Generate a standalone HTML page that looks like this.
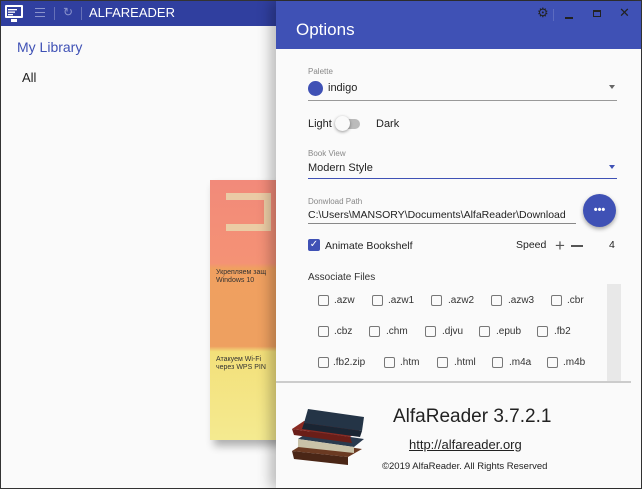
<!DOCTYPE html>
<html><head><meta charset="utf-8"><style>
*{margin:0;padding:0;box-sizing:border-box}
body{width:642px;height:489px;overflow:hidden;font-family:"Liberation Sans",sans-serif;background:#333;position:relative}
.a{position:absolute}
#win{left:1px;top:1px;width:640px;height:487px;background:#fafafa}
#tb{left:0;top:0;width:640px;height:25px;background:#303f9f}
#opt{left:276px;top:1px;width:365px;height:487px;background:#fafafa;box-shadow:-6px 0 12px rgba(0,0,0,.25)}
#oh{left:0;top:0;width:365px;height:48px;background:#3f51b5}
.lbl{font-size:8px;color:#888}
.txt{font-size:11px;color:#222}
.cb{width:11px;height:11px;border:1.5px solid #777;border-radius:2px;display:inline-block}
.ft{font-size:10px;color:#333;margin-top:1px}
</style></head><body>
<div id="win" class="a">
<div id="tb" class="a">
 <svg class="a" style="left:3px;top:3px" width="20" height="20" viewBox="0 0 20 20"><rect x="1" y="1" width="18" height="13" fill="#fff" rx="1"/><rect x="3" y="3" width="14" height="9" fill="#303f9f"/><rect x="4" y="5" width="9" height="1.3" fill="#fff"/><rect x="4" y="7.5" width="7" height="1.3" fill="#fff"/><rect x="4" y="10" width="5" height="1.3" fill="#fff"/><rect x="7" y="15" width="6" height="3" fill="#fff"/></svg>
 <div class="a" style="left:34px;top:7px;width:10px;height:9px;border-top:1.5px solid #8a93cc;border-bottom:1.5px solid #8a93cc"><div style="margin-top:2.5px;height:1.5px;background:#8a93cc"></div></div>
 <div class="a" style="left:53px;top:6px;width:1px;height:13px;background:#6570b8"></div>
 <div class="a" style="left:62px;top:4px;font-size:12px;color:#8a93cc">&#x21bb;</div>
 <div class="a" style="left:80px;top:6px;width:1px;height:13px;background:#6570b8"></div>
 <div class="a" style="left:88px;top:4px;font-size:13px;color:#fff">ALFAREADER</div>
</div>
<div class="a" style="left:16px;top:38px;font-size:14px;color:#3f51b5">My Library</div>
<div class="a" style="left:21px;top:69px;font-size:13px;color:#222">All</div>
<div class="a" style="left:209px;top:179px;width:70px;height:260px;background:linear-gradient(#f28a7a 0%,#f49275 32%,#f0a060 34%,#eea060 64%,#f3e07a 66%,#f4ea90 100%);box-shadow:4px 6px 8px rgba(0,0,0,.3)"></div>
<div class="a" style="left:225px;top:192px;width:45px;height:38px;border:7px solid #e8e7b8;border-left:none;opacity:.7"></div>
<div class="a" style="left:215px;top:268px;font-size:7px;color:#333;line-height:8px">Укрепляем защ<br>Windows 10</div>
<div class="a" style="left:215px;top:355px;font-size:7px;color:#333;line-height:8px">Атакуем Wi-Fi<br>через WPS PIN</div>
</div>
<div id="opt" class="a">
<div id="oh" class="a">
 <div class="a" style="left:20px;top:19px;font-size:17px;color:#fff">Options</div>
 <div class="a" style="left:261px;top:4px;font-size:13px;color:#222">&#9881;</div>
 <div class="a" style="left:277px;top:8px;width:1px;height:12px;background:#5c6bc0"></div>
 <div class="a" style="left:289px;top:16px;width:8px;height:2px;background:#222"></div>
 <div class="a" style="left:317px;top:9px;width:8px;height:7px;border:1.5px solid #222;border-top-width:2.5px"></div>
 <div class="a" style="left:343px;top:4px;font-size:13px;color:#222">✕</div>
</div>
<div class="a lbl" style="left:32px;top:66px">Palette</div>
<div class="a" style="left:32px;top:80px;width:15px;height:15px;border-radius:50%;background:#3f51b5"></div>
<div class="a txt" style="left:52px;top:81px">indigo</div>
<div class="a" style="left:333px;top:84px;border:3px solid transparent;border-top:4px solid #666"></div>
<div class="a" style="left:32px;top:99px;width:309px;height:1px;background:#999"></div>
<div class="a txt" style="left:32px;top:117px">Light</div>
<div class="a" style="left:62px;top:118px;width:22px;height:10px;border-radius:5px;background:#bbb"></div>
<div class="a" style="left:59px;top:115px;width:15px;height:15px;border-radius:50%;background:#fafafa;box-shadow:0 1px 3px rgba(0,0,0,.4)"></div>
<div class="a txt" style="left:100px;top:117px">Dark</div>
<div class="a lbl" style="left:32px;top:148px">Book View</div>
<div class="a txt" style="left:32px;top:161px">Modern Style</div>
<div class="a" style="left:333px;top:164px;border:3px solid transparent;border-top:4px solid #3f51b5"></div>
<div class="a" style="left:32px;top:177px;width:309px;height:1px;background:#3f51b5"></div>
<div class="a lbl" style="left:32px;top:196px">Donwload Path</div>
<div class="a" style="left:32px;top:208px;font-size:10.5px;color:#222">C:\Users\MANSORY\Documents\AlfaReader\Download</div>
<div class="a" style="left:32px;top:222px;width:268px;height:1px;background:#888"></div>
<div class="a" style="left:307px;top:193px;width:33px;height:33px;border-radius:50%;background:#3f51b5;box-shadow:0 2px 4px rgba(0,0,0,.35);color:#fff;font-size:11px;text-align:center;line-height:33px;font-weight:bold">•••</div>
<div class="a" style="left:32px;top:238px;width:12px;height:12px;background:#3f51b5;border-radius:2px;color:#fff;font-size:10px;line-height:12px;text-align:center">✓</div>
<div class="a txt" style="left:49px;top:239px;font-size:10.5px">Animate Bookshelf</div>
<div class="a txt" style="left:240px;top:238px;font-size:10.5px">Speed</div>
<div class="a" style="left:279px;top:238px;font-size:17px;line-height:13px;color:#555">+</div>
<div class="a" style="left:295px;top:244px;width:12px;height:2px;background:#555"></div>
<div class="a txt" style="left:333px;top:238px;font-size:10.5px">4</div>
<div class="a" style="left:32px;top:271px;font-size:10px;color:#333">Associate Files</div>
<div class="a" style="left:331px;top:283px;width:14px;height:98px;background:#e8e8e8"></div>
<div class="a" style="left:0;top:380px;width:355px;height:1.5px;background:#ccc"></div>
<div class="a" style="left:0;top:0;width:0;height:0">
 <div class="a" style="left:42px;top:292px"><span class="cb"></span></div><div class="a ft" style="left:58px;top:293px">.azw</div>
 <div class="a" style="left:96px;top:292px"><span class="cb"></span></div><div class="a ft" style="left:112px;top:293px">.azw1</div>
 <div class="a" style="left:155px;top:292px"><span class="cb"></span></div><div class="a ft" style="left:172px;top:293px">.azw2</div>
 <div class="a" style="left:215px;top:292px"><span class="cb"></span></div><div class="a ft" style="left:232px;top:293px">.azw3</div>
 <div class="a" style="left:275px;top:292px"><span class="cb"></span></div><div class="a ft" style="left:291px;top:293px">.cbr</div>
 <div class="a" style="left:42px;top:323px"><span class="cb"></span></div><div class="a ft" style="left:58px;top:324px">.cbz</div>
 <div class="a" style="left:93px;top:323px"><span class="cb"></span></div><div class="a ft" style="left:110px;top:324px">.chm</div>
 <div class="a" style="left:149px;top:323px"><span class="cb"></span></div><div class="a ft" style="left:166px;top:324px">.djvu</div>
 <div class="a" style="left:203px;top:323px"><span class="cb"></span></div><div class="a ft" style="left:220px;top:324px">.epub</div>
 <div class="a" style="left:261px;top:323px"><span class="cb"></span></div><div class="a ft" style="left:278px;top:324px">.fb2</div>
 <div class="a" style="left:42px;top:354px"><span class="cb"></span></div><div class="a ft" style="left:57px;top:355px">.fb2.zip</div>
 <div class="a" style="left:108px;top:354px"><span class="cb"></span></div><div class="a ft" style="left:124px;top:355px">.htm</div>
 <div class="a" style="left:161px;top:354px"><span class="cb"></span></div><div class="a ft" style="left:178px;top:355px">.html</div>
 <div class="a" style="left:216px;top:354px"><span class="cb"></span></div><div class="a ft" style="left:233px;top:355px">.m4a</div>
 <div class="a" style="left:271px;top:354px"><span class="cb"></span></div><div class="a ft" style="left:287px;top:355px">.m4b</div>
</div>
<svg class="a" style="left:12px;top:400px" width="84" height="70" viewBox="0 0 84 70">
 <polygon points="4,50 60,56 74,48 20,40" fill="#6b3a22"/><polygon points="4,50 60,56 60,64 6,58" fill="#4a2616"/>
 <polygon points="10,38 66,46 76,38 22,30" fill="#2a3a4e"/><polygon points="10,38 66,46 66,52 10,46" fill="#c9c2a8"/>
 <polygon points="4,28 62,36 74,28 16,20" fill="#8a2a22"/><polygon points="4,28 62,36 64,42 6,34" fill="#6a1e18"/>
 <polygon points="20,8 76,16 74,30 16,22" fill="#243446"/><polygon points="16,22 74,30 72,36 14,28" fill="#1a2533"/>
</svg>
<div class="a" style="left:117px;top:405px;font-size:19px;color:#222">AlfaReader 3.7.2.1</div>
<div class="a" style="left:133px;top:436px;font-size:13px;color:#222;text-decoration:underline">http://alfareader.org</div>
<div class="a" style="left:106px;top:460px;font-size:9.5px;color:#222">©2019 AlfaReader. All Rights Reserved</div>
</div>
</body></html>
